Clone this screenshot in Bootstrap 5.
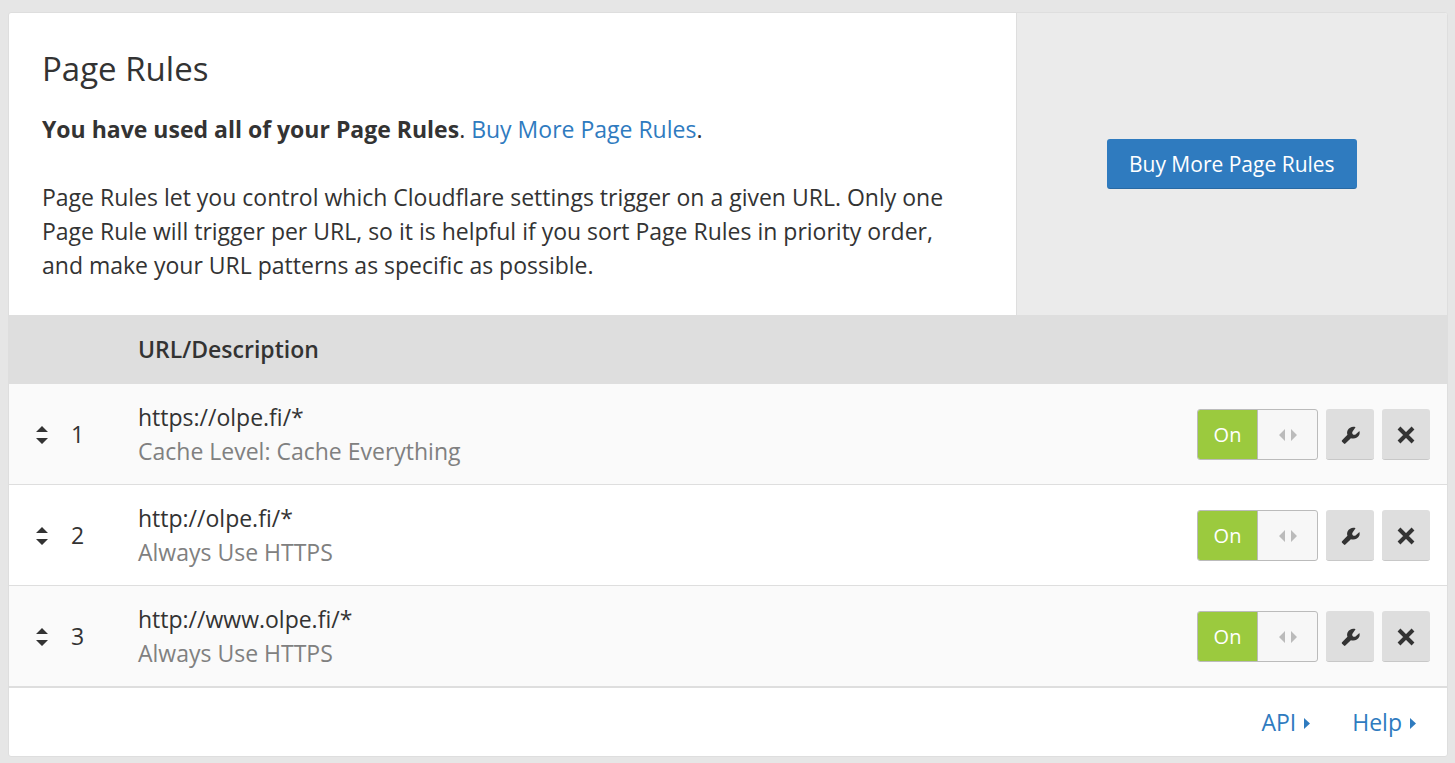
<!DOCTYPE html>
<html lang="en">
<head>
<meta charset="utf-8">
<meta name="viewport" content="width=device-width, initial-scale=1">
<title>Page Rules</title>
<link href="https://cdn.jsdelivr.net/npm/bootstrap@5.3.0/dist/css/bootstrap.min.css" rel="stylesheet">
<style>
  :root { --line: #dedede; --ink: #333; --link: #2f7bbf; }
  body { background: #e6e6e6; color: var(--ink); font-family: "Open Sans", sans-serif; font-size: 23px; line-height: 34px; padding: 12px 7px 6px 8px; }
  .rules-card { --bs-card-border-color: var(--line); --bs-card-border-radius: 3px; --bs-card-inner-border-radius: 2px; color: var(--ink); overflow: hidden; }
  .intro { flex: 0 0 70%; padding: 33px 60px 33px 33px; }
  .intro h1 { font-size: 33px; line-height: 46px; margin-bottom: 20px; }
  .intro p + p { margin-top: 34px; }
  .side { background: #ebebeb; border-left: 1px solid var(--line); }
  a { color: var(--link); text-decoration: none; }
  .btn-buy { --bs-btn-color: #fff; --bs-btn-bg: #2f7bbf; --bs-btn-hover-color: #fff; --bs-btn-hover-bg: #2869a3; --bs-btn-border-radius: 3px; --bs-btn-font-size: 21px; --bs-btn-line-height: 34px; --bs-btn-padding-x: 21px; --bs-btn-padding-y: 7px; border-bottom-color: #2869a3; }
  .rules-table { --bs-table-color: #333; --bs-table-bg: #fff; --bs-table-striped-color: #333; --bs-table-striped-bg: #fafafa; border-color: var(--line); }
  .rules-table > thead th { background: var(--line); font-weight: 600; padding: 17px 0; border-bottom-color: var(--line); }
  .rules-table > tbody td { padding: 16px 0; }
  .rules-table > tbody tr:last-child td { border-bottom-width: 2px; }
  .rules-table .order-col { width: 129px; padding-left: 27px; }
  .rules-table .tools-col { padding-right: 17px; }
  .order-group { gap: 23px; }
  .order-group svg { width: 12px; height: 20px; padding-top: 2px; fill: #333; }
  .muted { color: #808080; }
  .toggle { width: 121px; height: 51px; border: 1px solid #bbb; border-radius: 3px; background: #f7f7f7; font-size: 20px; cursor: pointer; overflow: hidden; }
  .toggle span { padding-top: 2px; }
  .toggle-on { background: #9bca3e; color: #fff; border-right: 1px solid #bbb; flex: 0 0 60px; }
  .btn-tool { --bs-btn-bg: #dedede; --bs-btn-hover-bg: #d0d0d0; --bs-btn-border-radius: 3px; width: 48px; height: 51px; padding: 3px 0 0; border: 0; border-bottom: 1px solid #c8c8c8; }
  .card-links { padding: 17px 31px; gap: 42px; }
  .card-links svg { width: 6px; height: 13px; padding-top: 2px; }
  .card-links a { gap: 8px; }
</style>
</head>
<body>
<svg class="d-none" aria-hidden="true">
  <symbol id="i-sort" viewBox="0 0 12 18"><path d="M0 6 6 0l6 6zM0 12h12l-6 6z"/></symbol>
  <symbol id="i-arrows" viewBox="0 0 18 12"><path d="M6 0v12L0 6zM12 0v12l6-6z"/></symbol>
  <symbol id="i-wrench" viewBox="0 0 20 20"><path d="M15.3 1.3C12.4.2 8.600 1.400 7 4.600c-.8 1.700-.7 3.200-.2 4.700L1.100 15c-.5.5-.5 1 0 1.500l2 2c.5.5 1 .5 1.500 0l5.800-5.700c3.400 1.100 7.600-.2 8.900-3.500.5-1.300.5-2.800.1-4.100l-3.800 3.500c-1 .8-2.400.7-3.200-.1s-.8-2.300 0-3.200z"/></symbol>
  <symbol id="i-close" viewBox="0 0 18 18"><path d="M2 2 16 16M16 2 2 16" fill="none" stroke="#333" stroke-width="4"/></symbol>
  <symbol id="i-caret" viewBox="0 0 6 11"><path d="M0 0 6 5.500 0 11z"/></symbol>
</svg>
<main class="card rules-card">
  <div class="d-flex">
    <section class="intro">
      <h1 class="fw-normal">Page Rules</h1>
      <p class="mb-0"><strong>You have used all of your Page Rules</strong>. <a href="#">Buy More Page Rules</a>.</p>
      <p class="mb-0">Page Rules let you control which Cloudflare settings trigger on a given URL. Only one Page Rule will trigger per URL, so it is helpful if you sort Page Rules in priority order, and make your URL patterns as specific as possible.</p>
    </section>
    <aside class="side flex-grow-1 d-flex align-items-center justify-content-center">
      <button type="button" class="btn btn-buy">Buy More Page Rules</button>
    </aside>
  </div>
  <table class="table table-striped rules-table align-middle mb-0">
    <thead>
      <tr><th class="order-col"></th><th scope="col">URL/Description</th><th class="tools-col"></th></tr>
    </thead>
    <tbody>
      <tr>
        <td class="order-col"><div class="order-group d-flex align-items-center"><svg><use href="#i-sort"/></svg>1</div></td>
        <td><div>https://olpe.fi/*</div><div class="muted">Cache Level: Cache Everything</div></td>
        <td class="tools-col"><div class="d-flex justify-content-end gap-2">
          <label class="toggle d-flex"><input class="visually-hidden" type="checkbox" role="switch" aria-label="Rule 1" checked><span class="toggle-on d-flex align-items-center justify-content-center">On</span><span class="flex-grow-1 d-flex align-items-center justify-content-center"><svg width="18" height="12" fill="#bbb"><use href="#i-arrows"/></svg></span></label>
          <button type="button" class="btn btn-tool d-flex align-items-center justify-content-center" aria-label="Edit rule 1"><svg width="19" height="19" fill="#333"><use href="#i-wrench"/></svg></button>
          <button type="button" class="btn btn-tool d-flex align-items-center justify-content-center" aria-label="Delete rule 1"><svg width="18" height="18"><use href="#i-close"/></svg></button>
        </div></td>
      </tr>
      <tr>
        <td class="order-col"><div class="order-group d-flex align-items-center"><svg><use href="#i-sort"/></svg>2</div></td>
        <td><div>http://olpe.fi/*</div><div class="muted">Always Use HTTPS</div></td>
        <td class="tools-col"><div class="d-flex justify-content-end gap-2">
          <label class="toggle d-flex"><input class="visually-hidden" type="checkbox" role="switch" aria-label="Rule 2" checked><span class="toggle-on d-flex align-items-center justify-content-center">On</span><span class="flex-grow-1 d-flex align-items-center justify-content-center"><svg width="18" height="12" fill="#bbb"><use href="#i-arrows"/></svg></span></label>
          <button type="button" class="btn btn-tool d-flex align-items-center justify-content-center" aria-label="Edit rule 2"><svg width="19" height="19" fill="#333"><use href="#i-wrench"/></svg></button>
          <button type="button" class="btn btn-tool d-flex align-items-center justify-content-center" aria-label="Delete rule 2"><svg width="18" height="18"><use href="#i-close"/></svg></button>
        </div></td>
      </tr>
      <tr>
        <td class="order-col"><div class="order-group d-flex align-items-center"><svg><use href="#i-sort"/></svg>3</div></td>
        <td><div>http://www.olpe.fi/*</div><div class="muted">Always Use HTTPS</div></td>
        <td class="tools-col"><div class="d-flex justify-content-end gap-2">
          <label class="toggle d-flex"><input class="visually-hidden" type="checkbox" role="switch" aria-label="Rule 3" checked><span class="toggle-on d-flex align-items-center justify-content-center">On</span><span class="flex-grow-1 d-flex align-items-center justify-content-center"><svg width="18" height="12" fill="#bbb"><use href="#i-arrows"/></svg></span></label>
          <button type="button" class="btn btn-tool d-flex align-items-center justify-content-center" aria-label="Edit rule 3"><svg width="19" height="19" fill="#333"><use href="#i-wrench"/></svg></button>
          <button type="button" class="btn btn-tool d-flex align-items-center justify-content-center" aria-label="Delete rule 3"><svg width="18" height="18"><use href="#i-close"/></svg></button>
        </div></td>
      </tr>
    </tbody>
  </table>
  <nav class="card-links d-flex justify-content-end" aria-label="More">
    <a class="d-flex align-items-center" href="#">API <svg fill="currentColor"><use href="#i-caret"/></svg></a>
    <a class="d-flex align-items-center" href="#">Help <svg fill="currentColor"><use href="#i-caret"/></svg></a>
  </nav>
</main>
<script src="https://cdn.jsdelivr.net/npm/bootstrap@5.3.0/dist/js/bootstrap.bundle.min.js"></script>
</body>
</html>
